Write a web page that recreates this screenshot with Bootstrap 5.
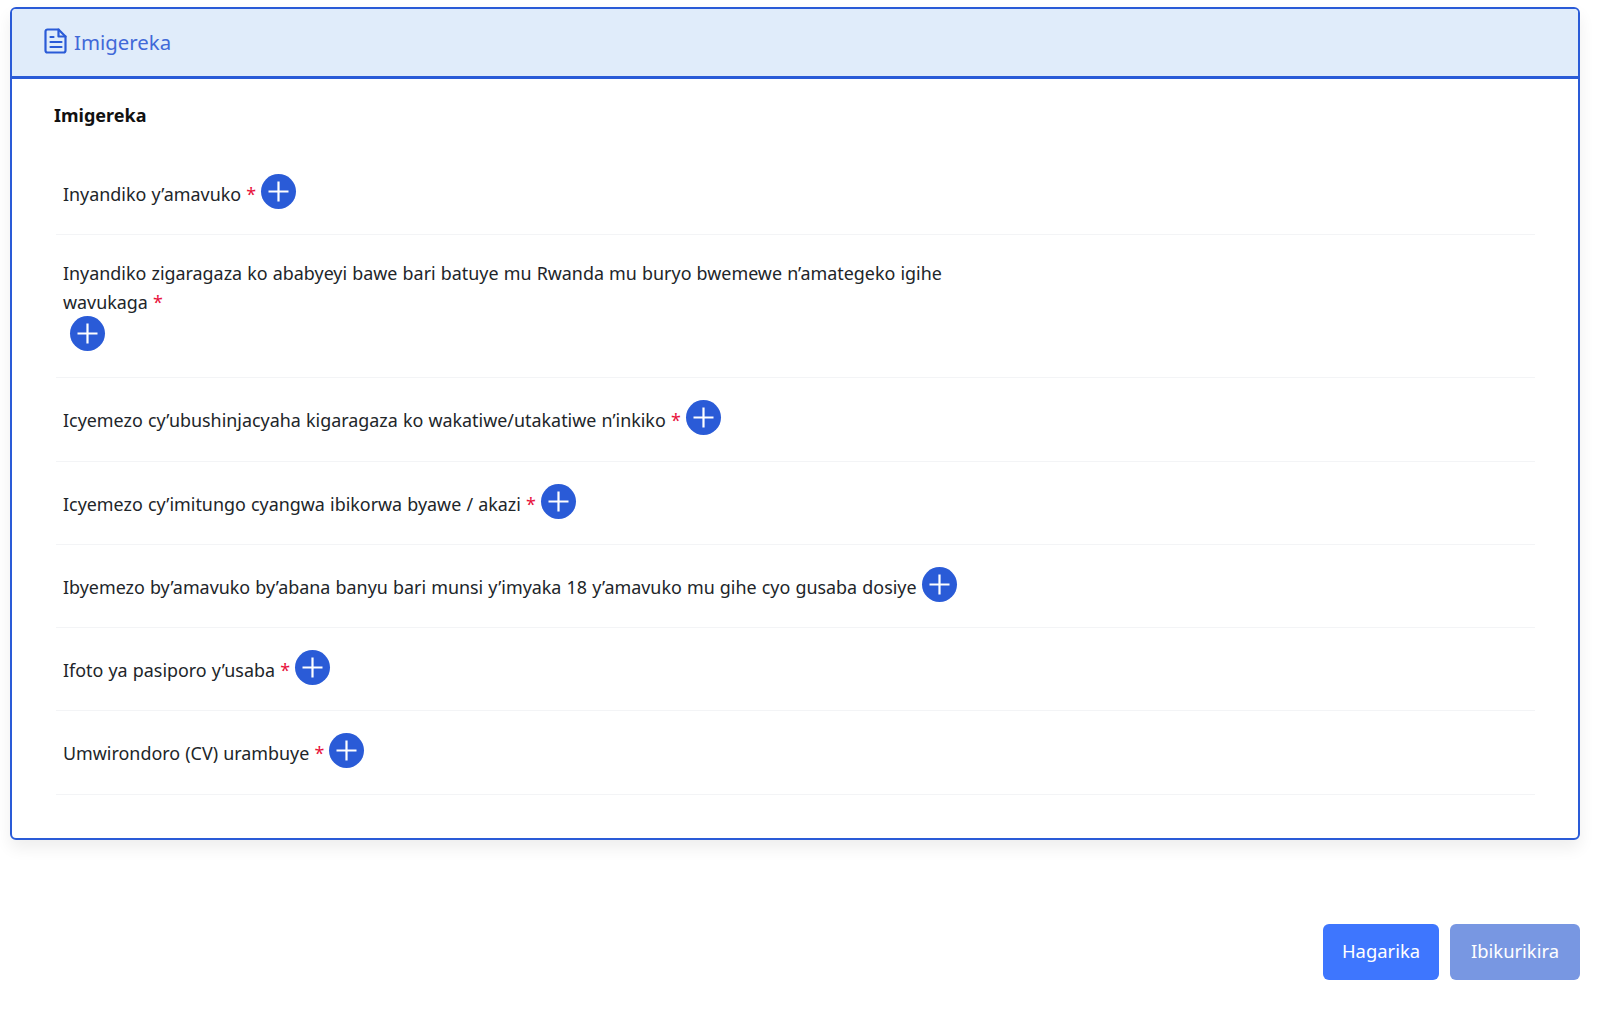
<!DOCTYPE html>
<html lang="rw">
<head>
<meta charset="utf-8">
<title>Imigereka</title>
<link rel="stylesheet" href="https://cdn.jsdelivr.net/npm/bootstrap@5.3.0/dist/css/bootstrap.min.css">
<style>
body{font-family:"Noto Sans","Open Sans",sans-serif;background:#fff;color:#212529;padding:7px 20px 0 10px;min-height:1009px;}
.att-card{border:2.5px solid #2a5bd7;border-radius:6px;box-shadow:0 8px 16px rgba(0,0,0,.07);height:833px;overflow:hidden;}
.att-head{background:#e0ecfa;border-bottom:3px solid #2a5bd7;height:70px;padding-left:32px;color:#4169d8;font-size:20.4px;gap:6px;}
.att-head svg{margin-top:-4px;}
.att-body{padding:22px 43px 0 44px;}
.att-title{font-size:18px;font-weight:700;color:#111;line-height:28px;margin:0 0 23px -2px;}
.att-row{padding:22px 0 25.25px 7px;border-bottom:1px solid #f3f4f6;font-size:17.9px;word-spacing:.5px;line-height:29px;color:#212529;}
.att-row.tall{padding-top:24px;padding-bottom:26px;}
.att-label{max-width:905px;}
.att-star{color:#e8123c;}
.att-add{display:inline-flex;align-items:center;justify-content:center;width:35px;height:35px;border:0;border-radius:50%;background:#2a5bd7;padding:0;margin-left:0;vertical-align:-2px;}
.att-row.tall .att-add{display:flex;margin:-1px 0 0 7px;}
.att-foot{gap:11px;margin-top:84px;}
.att-btn{height:56px;font-size:18.4px;border-radius:6px;color:#fff;border:0;padding-bottom:8px;}
.att-cancel{background:#3e76fe;width:116px;}
.att-next{background:#7897e2;width:130px;}
</style>
</head>
<body>
<div class="att-card">
  <div class="att-head d-flex align-items-center">
    <svg width="24" height="26" viewBox="0 0 24 26" fill="none" stroke="#2a5bd7" stroke-width="2.2" stroke-linejoin="round" stroke-linecap="round"><path d="M3.5 1.5h11l7 7v14a2 2 0 0 1-2 2h-16a2 2 0 0 1-2-2v-19a2 2 0 0 1 2-2z"/><path d="M14.5 1.5v7h7"/><path d="M6.5 9h3M6.5 14h11M6.5 19h11"/></svg>
    <span>Imigereka</span>
  </div>
  <div class="att-body">
    <div class="att-title">Imigereka</div>
    <div class="att-row"><span class="att-label">Inyandiko y’amavuko <span class="att-star">*</span></span> <button class="att-add" type="button" aria-label="Add"><svg width="23" height="23" viewBox="0 0 23 23"><path d="M11.5 1.5v20M1.5 11.5h20" stroke="#fff" stroke-width="2.2"/></svg></button></div>
    <div class="att-row tall"><div class="att-label">Inyandiko zigaragaza ko ababyeyi bawe bari batuye mu Rwanda mu buryo bwemewe n’amategeko igihe wavukaga <span class="att-star">*</span></div><button class="att-add" type="button" aria-label="Add"><svg width="23" height="23" viewBox="0 0 23 23"><path d="M11.5 1.5v20M1.5 11.5h20" stroke="#fff" stroke-width="2.2"/></svg></button></div>
    <div class="att-row"><span class="att-label">Icyemezo cy’ubushinjacyaha kigaragaza ko wakatiwe/utakatiwe n’inkiko <span class="att-star">*</span></span> <button class="att-add" type="button" aria-label="Add"><svg width="23" height="23" viewBox="0 0 23 23"><path d="M11.5 1.5v20M1.5 11.5h20" stroke="#fff" stroke-width="2.2"/></svg></button></div>
    <div class="att-row"><span class="att-label">Icyemezo cy’imitungo cyangwa ibikorwa byawe / akazi <span class="att-star">*</span></span> <button class="att-add" type="button" aria-label="Add"><svg width="23" height="23" viewBox="0 0 23 23"><path d="M11.5 1.5v20M1.5 11.5h20" stroke="#fff" stroke-width="2.2"/></svg></button></div>
    <div class="att-row"><span class="att-label">Ibyemezo by’amavuko by’abana banyu bari munsi y’imyaka 18 y’amavuko mu gihe cyo gusaba dosiye</span> <button class="att-add" type="button" aria-label="Add"><svg width="23" height="23" viewBox="0 0 23 23"><path d="M11.5 1.5v20M1.5 11.5h20" stroke="#fff" stroke-width="2.2"/></svg></button></div>
    <div class="att-row"><span class="att-label">Ifoto ya pasiporo y’usaba <span class="att-star">*</span></span> <button class="att-add" type="button" aria-label="Add"><svg width="23" height="23" viewBox="0 0 23 23"><path d="M11.5 1.5v20M1.5 11.5h20" stroke="#fff" stroke-width="2.2"/></svg></button></div>
    <div class="att-row"><span class="att-label">Umwirondoro (CV) urambuye <span class="att-star">*</span></span> <button class="att-add" type="button" aria-label="Add"><svg width="23" height="23" viewBox="0 0 23 23"><path d="M11.5 1.5v20M1.5 11.5h20" stroke="#fff" stroke-width="2.2"/></svg></button></div>
  </div>
</div>
<div class="att-foot d-flex justify-content-end">
  <button class="btn att-btn att-cancel" type="button">Hagarika</button>
  <button class="btn att-btn att-next" type="button">Ibikurikira</button>
</div>
</body>
</html>
